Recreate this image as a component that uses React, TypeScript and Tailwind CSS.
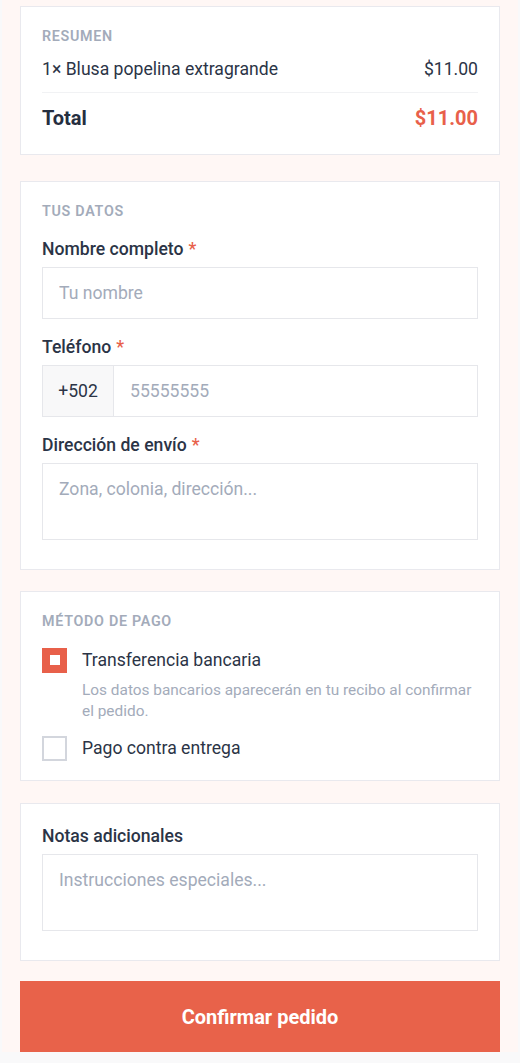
import { useState } from "react";

const font = { fontFamily: "Roboto, 'Liberation Sans', sans-serif" };

function SectionTitle({ children }: { children: React.ReactNode }) {
  return (
    <div className="text-[14.3px] leading-[18px] font-semibold uppercase tracking-[0.05em] text-[#a3abba]">
      {children}
    </div>
  );
}

function Label({ children, required }: { children: React.ReactNode; required?: boolean }) {
  return (
    <div className="text-[17.6px] leading-6 font-medium text-[#2b3446] mb-[6px]">
      {children}
      {required && <span className="text-[#e8604a] ml-[5px]">*</span>}
    </div>
  );
}

const areaCls =
  "block w-full h-[77px] resize-none border border-[#e6e7eb] bg-white px-4 py-[12px] text-[17.6px] leading-[26px] text-[#2b3446] placeholder:text-[#a3abba] outline-none";

function Option({
  checked,
  label,
  onClick,
}: {
  checked: boolean;
  label: string;
  onClick: () => void;
}) {
  return (
    <button type="button" onClick={onClick} className="flex items-center gap-[15px] w-full text-left">
      {checked ? (
        <span className="w-[25px] h-[25px] shrink-0 flex items-center justify-center bg-[#e8604a]">
          <span className="w-[10px] h-[10px] bg-white" />
        </span>
      ) : (
        <span className="w-[25px] h-[25px] shrink-0 border-2 border-[#d3d6dd] bg-white" />
      )}
      <span className="text-[17.6px] leading-[26px] text-[#2b3446]">{label}</span>
    </button>
  );
}

export default function App() {
  const [pago, setPago] = useState<"transfer" | "entrega">("transfer");

  return (
    <div className="min-h-screen bg-[#f9f9fa]" style={font}>
      <div className="mx-[2px] bg-[#fff7f5] px-[18px] pt-[6px]">
        {/* Resumen */}
        <section className="bg-white border border-[#e9e9ee] px-[21px] pt-5 pb-[22px]">
          <SectionTitle>Resumen</SectionTitle>
          <div className="flex justify-between items-center mt-[11px] pb-[10px] border-b border-[#f1f2f4] text-[17.6px] leading-[26px] text-[#2b3446]">
            <span>1× Blusa popelina extragrande</span>
            <span>$11.00</span>
          </div>
          <div className="flex justify-between items-center mt-[11px] text-[20px] leading-7 font-bold">
            <span className="text-[#252e3f]">Total</span>
            <span className="text-[#e8604a]">$11.00</span>
          </div>
        </section>

        {/* Tus datos */}
        <section className="mt-[26px] bg-white border border-[#e9e9ee] px-[21px] pt-5 pb-[29px]">
          <SectionTitle>Tus datos</SectionTitle>
          <div className="mt-[17px] flex flex-col gap-4">
            <div>
              <Label required>Nombre completo</Label>
              <input
                className="w-full h-[52px] border border-[#e6e7eb] bg-white px-4 text-[17.6px] text-[#2b3446] placeholder:text-[#a3abba] outline-none"
                placeholder="Tu nombre"
              />
            </div>
            <div>
              <Label required>Teléfono</Label>
              <div className="flex h-[52px] border border-[#e6e7eb]">
                <div className="w-[71px] flex items-center justify-center bg-[#f8f8f9] border-r border-[#e6e7eb] text-[17.6px] text-[#2b3446]">
                  +502
                </div>
                <input
                  className="flex-1 min-w-0 bg-white px-4 text-[17.6px] text-[#2b3446] placeholder:text-[#a3abba] outline-none"
                  placeholder="55555555"
                />
              </div>
            </div>
            <div>
              <Label required>Dirección de envío</Label>
              <textarea className={areaCls} placeholder="Zona, colonia, dirección..." />
            </div>
          </div>
        </section>

        {/* Metodo de pago */}
        <section className="mt-[21px] bg-white border border-[#e9e9ee] px-[21px] pt-5 pb-[19px]">
          <SectionTitle>Método de pago</SectionTitle>
          <div className="mt-[17px]">
            <Option
              checked={pago === "transfer"}
              label="Transferencia bancaria"
              onClick={() => setPago("transfer")}
            />
            {pago === "transfer" && (
              <p className="pl-[40px] mt-[7px] text-[15.4px] leading-[21px] text-[#a3abba]">
                Los datos bancarios aparecerán en tu recibo al confirmar el pedido.
              </p>
            )}
            <div className="mt-[13px]">
              <Option
                checked={pago === "entrega"}
                label="Pago contra entrega"
                onClick={() => setPago("entrega")}
              />
            </div>
          </div>
        </section>

        {/* Notas */}
        <section className="mt-[22px] bg-white border border-[#e9e9ee] px-[21px] pt-5 pb-[29px]">
          <Label>Notas adicionales</Label>
          <textarea className={areaCls} placeholder="Instrucciones especiales..." />
        </section>

        <button
          type="button"
          className="mt-[20px] w-full h-[71px] bg-[#e8624a] text-white text-[20px] font-bold"
        >
          Confirmar pedido
        </button>
      </div>
    </div>
  );
}
